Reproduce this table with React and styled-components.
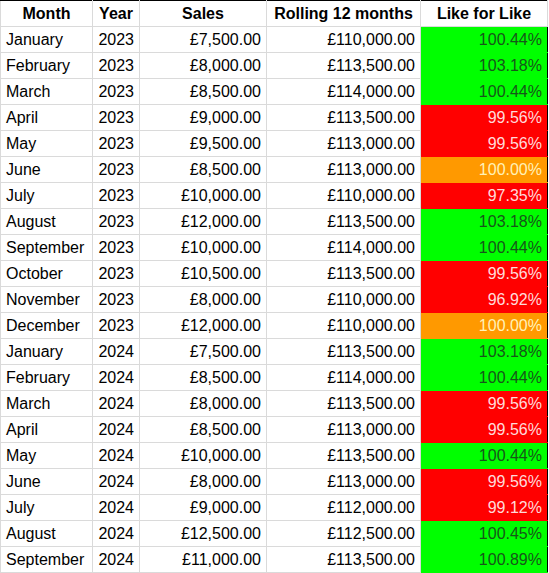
import styled, { createGlobalStyle } from "styled-components"

const rows = [
  ['January', 2023, 7500, 110000, 100.44],
  ['February', 2023, 8000, 113500, 103.18],
  ['March', 2023, 8500, 114000, 100.44],
  ['April', 2023, 9000, 113500, 99.56],
  ['May', 2023, 9500, 113000, 99.56],
  ['June', 2023, 8500, 113000, 100.0],
  ['July', 2023, 10000, 110000, 97.35],
  ['August', 2023, 12000, 113500, 103.18],
  ['September', 2023, 10000, 114000, 100.44],
  ['October', 2023, 10500, 113500, 99.56],
  ['November', 2023, 8000, 110000, 96.92],
  ['December', 2023, 12000, 110000, 100.0],
  ['January', 2024, 7500, 113500, 103.18],
  ['February', 2024, 8500, 114000, 100.44],
  ['March', 2024, 8000, 113500, 99.56],
  ['April', 2024, 8500, 113000, 99.56],
  ['May', 2024, 10000, 113500, 100.44],
  ['June', 2024, 8000, 113000, 99.56],
  ['July', 2024, 9000, 112000, 99.12],
  ['August', 2024, 12500, 112500, 100.45],
  ['September', 2024, 11000, 113500, 100.89],
]

const statusColors = {
  up: { bg: '#00ff00', fg: '#17561a' },
  flat: { bg: '#ff9900', fg: '#fff2b8' },
  down: { bg: '#ff0000', fg: '#ffdada' },
}

const money = (n) =>
  '£' + n.toLocaleString('en-GB', { minimumFractionDigits: 2, maximumFractionDigits: 2 })

const statusOf = (v) => (v > 100 ? 'up' : v < 100 ? 'down' : 'flat')

export default function App() {
  return (
    <>
      <GlobalStyle />
      <Sheet>
        <colgroup>
          <col style={{ width: 92 }} />
          <col style={{ width: 47 }} />
          <col style={{ width: 127 }} />
          <col style={{ width: 154 }} />
          <col style={{ width: 127 }} />
        </colgroup>
        <thead>
          <tr>
            <HeadCell>Month</HeadCell>
            <HeadCell>Year</HeadCell>
            <HeadCell>Sales</HeadCell>
            <HeadCell>Rolling 12 months</HeadCell>
            <HeadCell>Like for Like</HeadCell>
          </tr>
        </thead>
        <tbody>
          {rows.map(([month, year, sales, rolling, lfl], i) => (
            <tr key={i}>
              <Cell>{month}</Cell>
              <Cell $align="right">{year}</Cell>
              <Cell $align="right">{money(sales)}</Cell>
              <Cell $align="right">{money(rolling)}</Cell>
              <StatusCell $status={statusOf(lfl)}>{lfl.toFixed(2)}%</StatusCell>
            </tr>
          ))}
        </tbody>
      </Sheet>
    </>
  )
}

const GlobalStyle = createGlobalStyle`
  html, body {
    margin: 0;
    padding: 0;
    background: #fff;
  }
`;

const Sheet = styled.table`
  border-collapse: collapse;
  table-layout: fixed;
  width: 548px;
  border: 1px solid #000;
  font-family: 'Liberation Sans', Arial, sans-serif;
  font-size: 16px;
  color: #000;
`;

const Cell = styled.td`
  height: 25px;
  padding: 0 5px;
  box-sizing: border-box;
  border: 1px solid #dadada;
  text-align: ${props => props.$align || 'left'};
  white-space: nowrap;
  overflow: hidden;
  line-height: 25px;
`;

const HeadCell = styled.th`
  height: 25px;
  padding: 0 4px;
  border: 1px solid #dadada;
  border-top: 1px solid #000;
  font-weight: bold;
  text-align: center;
  white-space: nowrap;
  line-height: 25px;
`;

const StatusCell = styled(Cell)`
  text-align: right;
  background: ${props => statusColors[props.$status].bg};
  color: ${props => statusColors[props.$status].fg};
  border-color: ${props => statusColors[props.$status].bg};
  border-right: 1px solid #000;
`;
